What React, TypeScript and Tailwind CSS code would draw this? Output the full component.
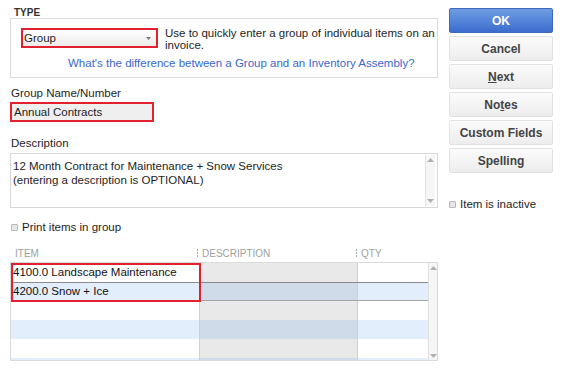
import React from "react";

const Btn = ({ children, primary }: { children: React.ReactNode; primary?: boolean }) => (
  <div
    className={
      primary
        ? "h-[25px] w-[104px] flex items-center justify-center rounded-[2px] border border-[#3f68bd] bg-gradient-to-b from-[#6f9de2] to-[#3c6cce] text-white font-bold text-[12px]"
        : "h-[25px] w-[104px] flex items-center justify-center rounded-[2px] border border-[#e2e2e2] bg-gradient-to-b from-[#fbfbfb] to-[#ededed] text-[#444] font-bold text-[12px]"
    }
  >
    {children}
  </div>
);

const Check = () => <div className="w-[7px] h-[7px] border border-[#b9b9b9] bg-[#e6e6e6] rounded-[1px]" />;

const UpArrow = () => (
  <svg width="7" height="4" viewBox="0 0 7 4"><path d="M0 4 L3.5 0 L7 4 Z" fill="#b0b0b0" /></svg>
);
const DownArrow = () => (
  <svg width="7" height="4" viewBox="0 0 7 4"><path d="M0 0 L3.5 4 L7 0 Z" fill="#b0b0b0" /></svg>
);

const Dots = () => (
  <div className="flex flex-col gap-[1px] mr-[4px]">
    <div className="w-[1px] h-[2px] bg-[#aaa]" />
    <div className="w-[1px] h-[2px] bg-[#aaa]" />
    <div className="w-[1px] h-[2px] bg-[#aaa]" />
  </div>
);

const rows = [
  { item: "4100.0 Landscape Maintenance", blue: false, sel: false },
  { item: "4200.0 Snow + Ice", blue: true, sel: true },
  { item: "", blue: false, sel: false },
  { item: "", blue: true, sel: false },
  { item: "", blue: false, sel: false },
  { item: "", blue: true, sel: false },
];

export default function App() {
  return (
    <div className="w-[567px] h-[368px] bg-white overflow-hidden font-['Liberation_Sans',Arial,sans-serif] text-[11.5px] text-[#1e1e1e] flex">
      {/* Left column */}
      <div className="ml-[10px] w-[428px] flex flex-col">
        <div className="h-[18px] pt-[8px] pl-[4px] leading-[10px] text-[10px] font-bold text-[#333]">TYPE</div>
        <div className="h-[60px] border border-[#dcdcdc] pl-[10px] pt-[9px]">
          <div className="flex">
            <div className="w-[137px] h-[20px] border-2 border-[#e3212e] bg-gradient-to-b from-white to-[#ececec] flex items-center justify-between pl-[1px] pr-[5px] leading-[14px]">
              <span>Group</span>
              <svg width="5" height="3" viewBox="0 0 5 3"><path d="M0 0 L2.5 3 L5 0 Z" fill="#777" /></svg>
            </div>
            <div className="ml-[7px] mt-[-1px] w-[272px] leading-[12px]">
              Use to quickly enter a group of individual items on an invoice.
            </div>
          </div>
          <div className="ml-[47px] mt-[6px] leading-[12px] text-[#3a67cc]">
            What's the difference between a Group and an Inventory Assembly?
          </div>
        </div>

        <div className="mt-[9px] pl-[1px] leading-[12px]">Group Name/Number</div>
        <div className="mt-[3px] w-[144px] h-[20px] border-2 border-[#e3212e] bg-[#efefef] flex items-center pl-[2px] pt-[1px]">
          Annual Contracts
        </div>

        <div className="mt-[15px] pl-[1px] leading-[12px]">Description</div>
        <div className="mt-[4px] h-[55px] border border-[#d8d8d8] flex">
          <div className="flex-1 pl-[2px] pt-[5px] leading-[14px]">
            12 Month Contract for Maintenance + Snow Services
            <br />
            (entering a description is OPTIONAL)
          </div>
          <div className="w-[10px] mr-[2px] my-[1px] border-l border-[#e2e2e2] bg-[#f6f6f6] flex flex-col items-center justify-between py-[3px]">
            <UpArrow />
            <DownArrow />
          </div>
        </div>

        <div className="mt-[13px] flex items-center leading-[12px]">
          <div className="ml-[1px] mr-[4px]"><Check /></div>
          <span>Print items in group</span>
        </div>

        <div className="mt-[13px] h-[14px] flex items-center text-[10px] text-[#a0a0a0]">
          <div className="w-[187px] pl-[5px]">ITEM</div>
          <Dots />
          <div className="w-[154px]">DESCRIPTION</div>
          <Dots />
          <div>QTY</div>
        </div>

        <div className="mt-[2px] h-[99px] border border-[#dadada] overflow-hidden relative flex">
          <div className="w-[417px] flex flex-col">
            {rows.map((r, i) => (
              <div
                key={i}
                className={
                  "h-[19px] shrink-0 flex " +
                  (r.blue ? "bg-[#e3eefc] " : "bg-white ") +
                  (r.sel ? "border border-[#8a8a8a] border-b-[#a5a5a5] -ml-[1px] w-[419px]" : "")
                }
              >
                <div className="w-[188px] flex items-center pl-[2px] text-[11.5px] text-[#111]">{r.item}</div>
                <div className={"w-[159px] border-l border-[#d0d0d0] border-r " + (r.blue ? "bg-[#cfdbe8]" : "bg-[#e9e9e9]")} />
                <div className="flex-1" />
              </div>
            ))}
          </div>
          <div className="w-[9px] border-l border-[#e0e0e0] bg-[#f6f6f6] flex flex-col items-center justify-between pt-[3px] pb-[2px]">
            <UpArrow />
            <DownArrow />
          </div>
          <div className="absolute left-0 top-0 w-[190px] h-[39px] border-2 border-[#e3212e]" />
        </div>
      </div>

      {/* Right column */}
      <div className="ml-[11px] pt-[8px] flex flex-col gap-[3px]">
        <Btn primary>OK</Btn>
        <Btn>Cancel</Btn>
        <Btn><span><span className="underline">N</span>ext</span></Btn>
        <Btn><span>No<span className="underline">t</span>es</span></Btn>
        <Btn>Custom Fields</Btn>
        <Btn><span>Spellin<span className="underline">g</span></span></Btn>
        <div className="mt-[22px] flex items-center leading-[12px]">
          <div className="mr-[4px]"><Check /></div>
          <span>Item is inactive</span>
        </div>
      </div>
    </div>
  );
}
